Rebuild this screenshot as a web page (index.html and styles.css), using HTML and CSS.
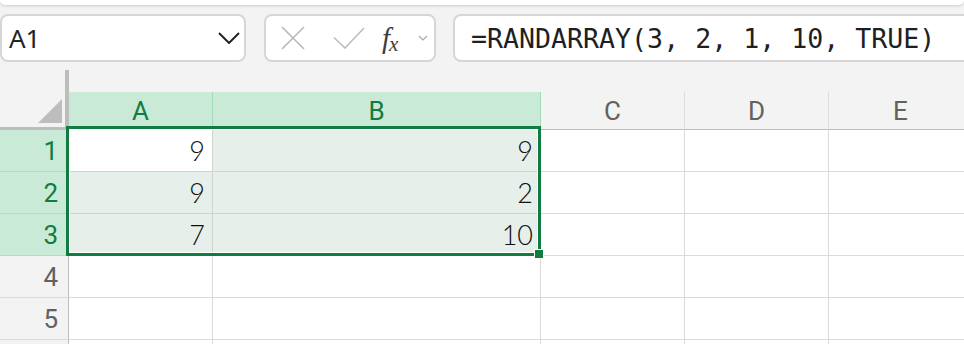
FILE: index.html
```html
<!DOCTYPE html>
<html lang="en">
<head>
    <meta charset="UTF-8">
    <meta name="viewport" content="width=device-width, initial-scale=1.0">
    <title>Sheet - RANDARRAY</title>
    <link rel="stylesheet" href="styles.css">
</head>
<body>
    <div class="ribbon"></div>

    <div class="formula-row">
        <div class="name-box">
            <span class="cell-ref">A1</span>
            <svg class="name-caret" width="22" height="12" viewBox="0 0 22 12">
                <path d="M1 1L11 11L21 1" fill="none" stroke="#242424" stroke-width="2"/>
            </svg>
        </div>
        <div class="fx-controls">
            <svg class="icon-cancel" width="24" height="24" viewBox="0 0 24 24">
                <path d="M1 1L23 23M23 1L1 23" fill="none" stroke="#b8b8b8" stroke-width="1.6"/>
            </svg>
            <svg class="icon-enter" width="32" height="22" viewBox="0 0 32 22">
                <path d="M1 10.5L12 21L31 1" fill="none" stroke="#bdbdbd" stroke-width="1.6"/>
            </svg>
            <span class="fx"><i>f</i><i class="fx-x">x</i></span>
            <svg class="fx-caret" width="10" height="6" viewBox="0 0 10 6">
                <path d="M1 1L5 5L9 1" fill="none" stroke="#a8a8a8" stroke-width="1.2"/>
            </svg>
        </div>
        <div class="formula-input">=RANDARRAY(3, 2, 1, 10, TRUE)</div>
    </div>

    <div class="sheet">
        <div class="grid">
            <div class="corner"><span class="corner-tri"></span></div>
            <div class="col-head on">A</div>
            <div class="col-head on">B</div>
            <div class="col-head">C</div>
            <div class="col-head">D</div>
            <div class="col-head">E</div>

            <div class="row-head on">1</div>
            <div class="cell active">9</div>
            <div class="cell picked">9</div>
            <div class="cell"></div>
            <div class="cell"></div>
            <div class="cell"></div>

            <div class="row-head on">2</div>
            <div class="cell picked">9</div>
            <div class="cell picked">2</div>
            <div class="cell"></div>
            <div class="cell"></div>
            <div class="cell"></div>

            <div class="row-head on">3</div>
            <div class="cell picked">7</div>
            <div class="cell picked">10</div>
            <div class="cell"></div>
            <div class="cell"></div>
            <div class="cell"></div>

            <div class="row-head">4</div>
            <div class="cell"></div>
            <div class="cell"></div>
            <div class="cell"></div>
            <div class="cell"></div>
            <div class="cell"></div>

            <div class="row-head">5</div>
            <div class="cell"></div>
            <div class="cell"></div>
            <div class="cell"></div>
            <div class="cell"></div>
            <div class="cell"></div>

            <!-- row 6, only its top edge is in view -->
            <div class="row-head"></div>
            <div class="cell"></div>
            <div class="cell"></div>
            <div class="cell"></div>
            <div class="cell"></div>
            <div class="cell"></div>
        </div>

        <!-- selection frame over A1:B3 -->
        <div class="selection"><span class="fill-handle"></span></div>
    </div>
</body>
</html>
```

FILE: styles.css
```css
body {
    margin: 0;
    background: #f3f3f3;
    font-family: "Noto Sans", sans-serif;
    overflow: hidden;
    height: 344px;
}

.ribbon {
    height: 5px;
    background: #fff;
    border-radius: 0 0 8px 8px;
    box-shadow: 0 1px 3px rgba(0, 0, 0, 0.16);
}

.formula-row {
    display: flex;
    align-items: stretch;
    height: 48px;
    margin-top: 9px;
    white-space: nowrap;
}

.name-box,
.fx-controls,
.formula-input {
    box-sizing: border-box;
    background: #fff;
    border: 2px solid #d6d6d6;
    border-radius: 8px;
    display: flex;
    align-items: center;
}

.name-box {
    width: 246px;
    padding: 0 4px 0 7px;
    justify-content: space-between;
}

.cell-ref {
    font-size: 26px;
    color: #242424;
}

.fx-controls {
    width: 172px;
    margin-left: 18px;
    padding-left: 15px;
}

.icon-enter {
    margin-left: 28px;
}

.fx {
    margin-left: 17px;
    font-family: "Liberation Serif", serif;
    color: #3c3c3c;
    width: 26px;
}

.fx i {
    font-size: 29px;
}

.fx .fx-x {
    font-size: 21px;
    margin-left: -1px;
    position: relative;
    top: 3px;
}

.fx-caret {
    margin-left: 10px;
}

.formula-input {
    flex: 1;
    margin-left: 17px;
    margin-right: -30px;
    padding-left: 16px;
    font-family: "DejaVu Sans Mono", monospace;
    font-size: 26.6px;
    color: #1f1f1f;
}

.sheet {
    position: relative;
    margin-top: 8px;
}

.grid {
    display: grid;
    grid-template-columns: 69px 144px 328px 144px 144px 144px;
    grid-template-rows: 60px repeat(5, 42px) 8px;
}

.corner {
    position: relative;
    box-sizing: border-box;
    border-right: 4px solid #bdbdbd;
    border-bottom: 3px solid #bdbdbd;
}

.corner-tri {
    position: absolute;
    right: 3px;
    bottom: 4px;
    width: 0;
    height: 0;
    border-left: 24px solid transparent;
    border-bottom: 24px solid #bdbdbd;
}

.col-head {
    align-self: end;
    height: 38px;
    box-sizing: border-box;
    border-right: 1px solid #dcdcdc;
    border-bottom: 1px solid #bdbdbd;
    display: flex;
    align-items: center;
    justify-content: center;
    font-family: Roboto, sans-serif;
    font-size: 26px;
    color: #616161;
}

.col-head.on {
    background: #caead8;
    border-right-color: #a3dbb9;
    color: #107c41;
}

.row-head {
    box-sizing: border-box;
    border-right: 1px solid #bdbdbd;
    border-bottom: 1px solid #dadada;
    display: flex;
    align-items: center;
    justify-content: flex-end;
    padding-right: 10px;
    font-family: Roboto, sans-serif;
    font-size: 26px;
    color: #616161;
}

.row-head.on {
    background: #caead8;
    border-bottom-color: #b3dcc4;
    color: #107c41;
}

.cell {
    box-sizing: border-box;
    background: #fff;
    border-right: 1px solid #dadada;
    border-bottom: 1px solid #dadada;
    display: flex;
    align-items: center;
    justify-content: flex-end;
    padding-right: 7px;
    font-family: Lato, sans-serif;
    font-weight: 300;
    font-size: 27px;
    color: #111;
}

.cell.picked {
    background: #e6efe9;
    border-color: #d0d4d1;
}

.cell.active {
    border-color: #d0d4d1;
}

.selection {
    position: absolute;
    left: 66px;
    top: 56px;
    width: 475px;
    height: 130px;
    box-sizing: border-box;
    border: 3px solid #107c41;
    box-shadow: inset 0 0 0 1px #fff;
    pointer-events: none;
}

.fill-handle {
    position: absolute;
    right: -6px;
    bottom: -6px;
    width: 8px;
    height: 8px;
    background: #107c41;
    border: 1px solid #fff;
}
```
